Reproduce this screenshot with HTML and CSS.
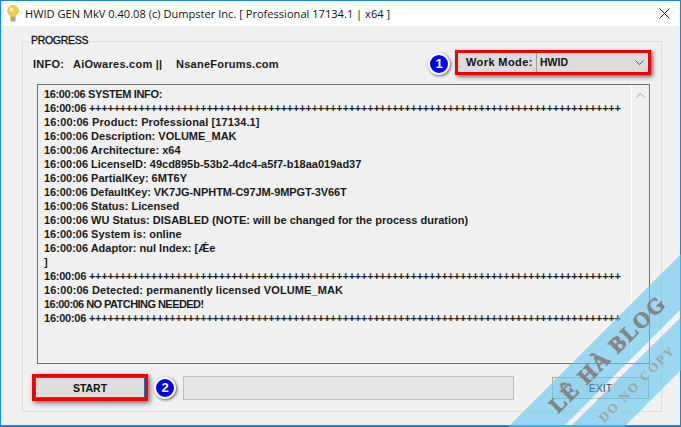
FILE: index.html
```html
<!DOCTYPE html>
<html lang="en">
<head>
<meta charset="utf-8">
<title>HWID GEN</title>
<link rel="stylesheet" href="styles.css">
</head>
<body>
<div class="window">
  <header class="titlebar">
    <svg class="app-icon" width="12" height="17" viewBox="0 0 12 17">
      <path d="M6 .5a5.300 5.300 0 0 0-3.300 9.500c.7.600.8 1.200.8 2h5c0-.8.100-1.400.8-2A5.300 5.300 0 0 0 6 .5z" fill="#f6cb45" stroke="#dcae35" stroke-width=".6"/>
      <circle cx="4.500" cy="4.500" r="2" fill="#fdf2bd"/>
      <rect x="3.500" y="12" width="5" height="4.500" rx="1" fill="#a3a3a3"/>
    </svg>
    <span class="title">HWID GEN MkV 0.40.08 (c) Dumpster Inc. [ Professional 17134.1 | x64 ]</span>
    <svg class="close" width="11" height="11" viewBox="0 0 11 11"><path d="M.5.500l10 10M10.500.500l-10 10" stroke="#222" stroke-width="1" fill="none"/></svg>
  </header>
  <main class="client">
    <section class="group">
      <h2 class="legend">PROGRESS</h2>
      <div class="info-row">
        <span class="info-label">INFO:</span>
        <span class="info-a">AiOwares.com ||</span>
        <span class="info-b">NsaneForums.com</span>
        <span class="badge badge-one">1</span>
        <div class="mode-box">
          <span class="mode-label">Work Mode:</span>
          <span class="mode-value">HWID</span>
          <svg class="chev" width="9" height="5" viewBox="0 0 9 5"><path d="M.5.500l4 4 4-4" stroke="#555" fill="none"/></svg>
        </div>
      </div>
      <div class="log">
        <div class="log-text">
          <div class="narrow">16:00:06 SYSTEM INFO:</div>
          <div class="plus">16:00:06 ++++++++++++++++++++++++++++++++++++++++++++++++++++++++++++++++++++++++++++++++++++++</div>
          <div class="wide">16:00:06 Product: Professional [17134.1]</div>
          <div>16:00:06 Description: VOLUME_MAK</div>
          <div>16:00:06 Architecture: x64</div>
          <div>16:00:06 LicenseID: 49cd895b-53b2-4dc4-a5f7-b18aa019ad37</div>
          <div>16:00:06 PartialKey: 6MT6Y</div>
          <div class="snug">16:00:06 DefaultKey: VK7JG-NPHTM-C97JM-9MPGT-3V66T</div>
          <div>16:00:06 Status: Licensed</div>
          <div>16:00:06 WU Status: DISABLED (NOTE: will be changed for the process duration)</div>
          <div>16:00:06 System is: online</div>
          <div>16:00:06 Adaptor: nul Index: [Ǽe</div>
          <div>]</div>
          <div class="plus">16:00:06 ++++++++++++++++++++++++++++++++++++++++++++++++++++++++++++++++++++++++++++++++++++++</div>
          <div class="wide">16:00:06 Detected: permanently licensed VOLUME_MAK</div>
          <div class="narrower">16:00:06 NO PATCHING NEEDED!</div>
          <div class="plus">16:00:06 ++++++++++++++++++++++++++++++++++++++++++++++++++++++++++++++++++++++++++++++++++++++</div>
        </div>
        <div class="scrollbar">
          <svg width="9" height="5" viewBox="0 0 9 5"><path d="M.5 4.500l4-4 4 4" stroke="#c4c4c4" stroke-width="1.500" fill="none"/></svg>
        </div>
      </div>
      <div class="actions">
        <div class="start-frame"><button class="start">START</button></div>
        <span class="badge badge-two">2</span>
        <div class="progress"></div>
        <button class="exit">EXIT</button>
      </div>
    </section>
  </main>
  <svg class="ribbon" width="681" height="427" viewBox="0 0 681 427">
    <polygon class="band" points="508,427 681,254 681,309 563,427"/>
    <polygon class="gap" points="563,427 681,309 681,317 570,427"/>
    <polygon class="band" points="570,427 681,317 681,370 624,427"/>
    <text class="rib-main" transform="translate(558 414) rotate(-45)">LÊ HÀ BLOG</text>
    <text class="rib-sub" transform="translate(604 423) rotate(-45)">DO NO COPY</text>
  </svg>
</div>
</body>
</html>
```

FILE: styles.css
```css
* { box-sizing: border-box; }
html, body { margin: 0; padding: 0; }
body { width: 681px; height: 427px; overflow: hidden; font-family: "Liberation Sans", Arial, sans-serif; }

.window {
  position: relative;
  width: 681px;
  height: 427px;
  display: flex;
  flex-direction: column;
  border: 1px solid #1a86d8;
  border-width: 1px 1px 2px 1px;
  background: #f0f0f0;
}

.titlebar {
  height: 25px;
  flex: none;
  display: flex;
  align-items: center;
  padding: 0 10px 1px 6px;
  background: #fff;
}
.app-icon { flex: none; margin-right: 6px; margin-top: 1px; }
.title { flex: 1; font-family: "Open Sans", "Noto Sans", sans-serif; font-size: 11.1px; color: #111; }
.close { flex: none; }

.client { flex: 1; padding: 15px 18px 13px 21px; display: flex; }

.group {
  position: relative;
  flex: 1;
  border: 1px solid #dcdcdc;
  padding: 6px 10px 0 14px;
  display: flex;
  flex-direction: column;
}
.legend {
  position: absolute;
  top: -9px;
  left: 7px;
  margin: 0;
  padding: 0 1px;
  background: #f0f0f0;
  font-size: 10.5px;
  font-weight: normal;
  letter-spacing: -.3px;
  line-height: 14px;
  color: #111;
  -webkit-text-stroke: .3px #111;
}

.info-row {
  height: 31px;
  display: flex;
  align-items: center;
  font-size: 11px;
  font-weight: bold;
  letter-spacing: .25px;
  color: #1a1a1a;
  margin-left: -4px;
}
.info-label { width: 40px; }
.info-a { width: 103px; }
.info-b { flex: 1; }

.badge {
  flex: none;
  width: 22px;
  height: 22px;
  border-radius: 50%;
  background: #0000f0;
  border: 2px solid #fff;
  box-shadow: 1px 1px 3px rgba(0,0,0,.6);
  color: #fff;
  font-size: 13px;
  font-weight: bold;
  letter-spacing: 0;
  line-height: 18px;
  text-align: center;
}
.badge-one { margin-right: 5px; }

.mode-box {
  width: 196px;
  height: 25px;
  margin-bottom: 3px;
  display: flex;
  align-items: center;
  border: 3px solid #f00000;
  background: #dcdcdc;
  box-shadow: 2px 2px 4px rgba(0,0,0,.55);
}
.mode-label { flex: none; width: 79px; padding-left: 8px; color: #111; height: 100%; line-height: 19px; border-right: 1px solid #a0a0a0; letter-spacing: .4px; }
.mode-value { flex: 1; padding-left: 3px; font-size: 10.5px; letter-spacing: 0; color: #111; }
.chev { flex: none; margin-right: 4px; }

.log {
  height: 280px;
  width: 613px;
  flex: none;
  display: flex;
  border: 1px solid #6e6e6e;
  box-shadow: inset 0 -1px 0 #fff;
  background: #f0f0f0;
  margin-top: 5px;
}
.log-text {
  flex: 1;
  padding: 2px 0 0 6px;
  font-size: 11px;
  font-weight: bold;
  line-height: 14px;
  color: #1a1a1a;
  white-space: nowrap;
  overflow: hidden;
}
.plus { letter-spacing: -.24px; }
.narrow { letter-spacing: -.35px; }
.narrower { letter-spacing: -.55px; }
.snug { letter-spacing: -.07px; }
.wide { letter-spacing: .1px; }
.scrollbar {
  width: 18px;
  flex: none;
  border-left: 1px solid #fff;
  display: flex;
  justify-content: center;
  padding-top: 8px;
}

.actions {
  display: flex;
  align-items: center;
  margin-top: 10px;
  margin-left: -5px;
}
.start-frame {
  width: 116px;
  height: 27px;
  border: 3px solid #f00000;
  box-shadow: 2px 2px 5px rgba(0,0,0,.55);
  flex: none;
}
.start {
  display: block;
  width: 100%;
  height: 100%;
  border: 1px solid #1b6fb0;
  background: #dedede;
  font: bold 10.5px "Liberation Sans", Arial, sans-serif;
  color: #111;
  padding: 0;
}
.badge-two { margin-left: 6px; }
.progress {
  flex: none;
  width: 331px;
  height: 24px;
  margin-left: 7px;
  background: #e6e6e6;
  border: 1px solid #bcbcbc;
}
.exit {
  flex: none;
  width: 97px;
  height: 22px;
  margin-left: 38px;
  background: #e6e6e6;
  border: 1px solid #adadad;
  font: 10.5px "Liberation Sans", Arial, sans-serif;
  color: #000;
  padding: 0;
}

.ribbon { position: absolute; left: -1px; top: -1px; pointer-events: none; }
.band { fill: #62c6f0; fill-opacity: .6; }
.gap { fill: #fff; fill-opacity: .25; }
.rib-main { font: bold 22px "Liberation Serif", serif; fill: #858585; stroke: #858585; stroke-width: .7px; letter-spacing: 1.800px; }
.rib-sub { font: bold 13px "Liberation Serif", serif; fill: #9ca6a6; letter-spacing: 2px; }
```
